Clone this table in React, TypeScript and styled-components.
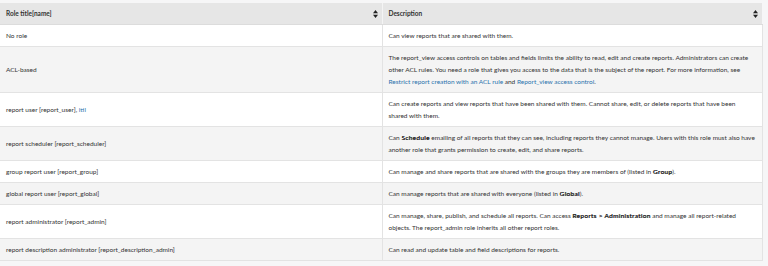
import React from "react";
import styled, { createGlobalStyle } from "styled-components";

const Global = createGlobalStyle`
  html, body { margin: 0; padding: 0; background: #f6f6f7; }
  body { font-family: Lato, "Open Sans", sans-serif; }
`;

const Page = styled.div`
  padding: 3px 6px 0 0;
  width: 768px;
  box-sizing: border-box;
`;

const Table = styled.table`
  width: 762px;
  border-collapse: collapse;
  table-layout: fixed;
  font-family: Lato, sans-serif;
  font-size: 6.5px;
  line-height: 12px;
  color: #333;
`;

const HeadCell = styled.th`
  background: #e6e6e6;
  text-align: left;
  font-weight: 700;
  color: #333;
  padding: 5px 6px 4px 6px;
  border-right: 1px solid #f4f4f4;
  border-bottom: 1px solid #dcdcdc;
  &:last-child { border-right: none; }
`;

const HeadInner = styled.div`
  display: flex;
  align-items: center;
  justify-content: space-between;
`;

const SortIcon = styled.svg`
  width: 5px;
  height: 8px;
  flex: none;
  margin-right: -2px;
`;

const Row = styled.tr<{ $alt?: boolean }>`
  background: ${(p) => (p.$alt ? "#f4f4f4" : "#ffffff")};
`;

const Cell = styled.td`
  padding: 5px 6px 4px 6px;
  vertical-align: middle;
  border-bottom: 1px solid #e3e3e3;
  border-right: 1px solid #e3e3e3;
`;

const Link = styled.a`
  color: #2a73ad;
  text-decoration: none;
`;

const B = styled.span`
  font-weight: 400;
  color: #222;
  letter-spacing: 0.3px;
  text-shadow: 0.35px 0 0 #222;
`;

const Sort = () => (
  <SortIcon viewBox="0 0 5 8">
    <path d="M2.5 0 L5 3.3 L0 3.3 Z" fill="#222" />
    <path d="M2.5 8 L5 4.7 L0 4.7 Z" fill="#222" />
  </SortIcon>
);

const rows: { name: React.ReactNode; desc: React.ReactNode }[] = [
  { name: "No role", desc: "Can view reports that are shared with them." },
  {
    name: "ACL-based",
    desc: (
      <>
        The report_view access controls on tables and fields limits the ability to read, edit and create reports.
        Administrators can create other ACL rules. You need a role that gives you access to the data that is the
        subject of the report. For more information, see{" "}
        <Link>Restrict report creation with an ACL rule</Link> and <Link>Report_view access control</Link>.
      </>
    ),
  },
  {
    name: (
      <>
        report user [report_user], <Link>itil</Link>
      </>
    ),
    desc: "Can create reports and view reports that have been shared with them. Cannot share, edit, or delete reports that have been shared with them.",
  },
  {
    name: "report scheduler [report_scheduler]",
    desc: (
      <>
        Can <B>Schedule</B> emailing of all reports that they can see, including reports they cannot manage. Users
        with this role must also have another role that grants permission to create, edit, and share reports.
      </>
    ),
  },
  {
    name: "group report user [report_group]",
    desc: (
      <>
        Can manage and share reports that are shared with the groups they are members of (listed in <B>Group</B>).
      </>
    ),
  },
  {
    name: "global report user [report_global]",
    desc: (
      <>
        Can manage reports that are shared with everyone (listed in <B>Global</B>).
      </>
    ),
  },
  {
    name: "report administrator [report_admin]",
    desc: (
      <>
        Can manage, share, publish, and schedule all reports. Can access <B>Reports &gt; Administration</B> and
        manage all report-related objects. The report_admin role inherits all other report roles.
      </>
    ),
  },
  {
    name: "report description administrator [report_description_admin]",
    desc: "Can read and update table and field descriptions for reports.",
  },
];

export default function App() {
  return (
    <>
      <Global />
      <Page>
        <Table>
          <colgroup>
            <col style={{ width: 382 }} />
            <col style={{ width: 380 }} />
          </colgroup>
          <thead>
            <tr>
              <HeadCell>
                <HeadInner>
                  <span>Role title[name]</span>
                  <Sort />
                </HeadInner>
              </HeadCell>
              <HeadCell>
                <HeadInner>
                  <span>Description</span>
                  <Sort />
                </HeadInner>
              </HeadCell>
            </tr>
          </thead>
          <tbody>
            {rows.map((r, i) => (
              <Row key={i} $alt={i % 2 === 1}>
                <Cell>{r.name}</Cell>
                <Cell>{r.desc}</Cell>
              </Row>
            ))}
          </tbody>
        </Table>
      </Page>
    </>
  );
}
